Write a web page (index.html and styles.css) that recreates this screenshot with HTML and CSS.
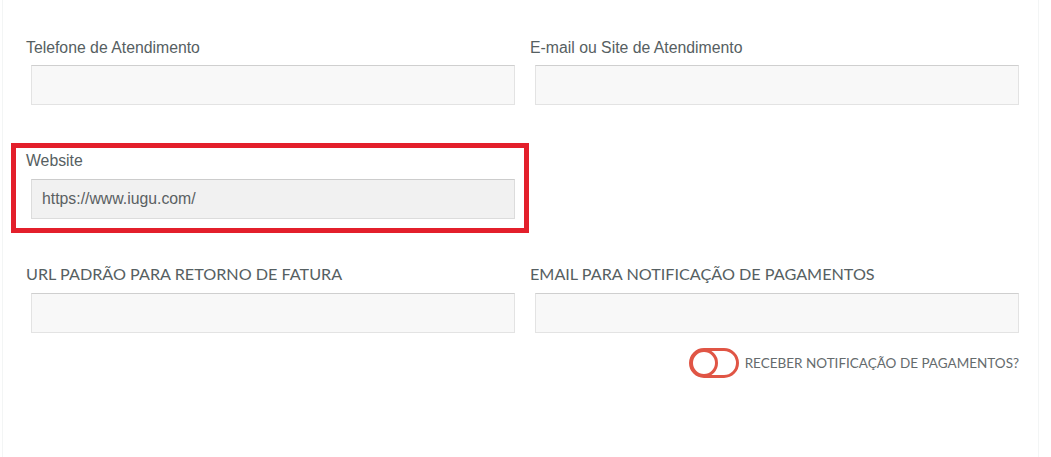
FILE: index.html
```html
<!DOCTYPE html>
<html lang="pt-BR">
<head>
<meta charset="utf-8">
<title>Configurações</title>
<link rel="stylesheet" href="styles.css">
</head>
<body>
<div class="panel">
  <div class="row">
    <div class="field">
      <label class="label">Telefone de Atendimento</label>
      <div class="input"></div>
    </div>
    <div class="field">
      <label class="label">E-mail ou Site de Atendimento</label>
      <div class="input"></div>
    </div>
  </div>

  <div class="highlight">
    <label class="label">Website</label>
    <div class="input disabled">https://www.iugu.com/</div>
  </div>

  <div class="row row-upper">
    <div class="field">
      <label class="label upper">URL PADRÃO PARA RETORNO DE FATURA</label>
      <div class="input"></div>
    </div>
    <div class="field">
      <label class="label upper">EMAIL PARA NOTIFICAÇÃO DE PAGAMENTOS</label>
      <div class="input"></div>
      <div class="toggle-row">
        <svg class="toggle" width="50" height="30" viewBox="0 0 50 30">
          <rect x="1.5" y="1.5" width="47" height="27" rx="13.5" ry="13.5" fill="none" stroke="#e05545" stroke-width="3"/>
          <circle cx="15" cy="15" r="12.5" fill="#fff" stroke="#e05545" stroke-width="3"/>
        </svg>
        <span class="toggle-label">RECEBER NOTIFICAÇÃO DE PAGAMENTOS?</span>
      </div>
    </div>
  </div>
</div>
</body>
</html>
```
FILE: styles.css
```css
html, body {
  margin: 0;
  padding: 0;
  background: #ffffff;
}

.panel {
  margin-left: 2px;
  width: 1037px;
  height: 457px;
  box-sizing: border-box;
  border-left: 1px solid #f3f5f5;
  border-right: 1px solid #f3f5f5;
  padding: 38px 0 0 8px;
  font-family: "Liberation Sans", Arial, sans-serif;
}

.row {
  display: grid;
  grid-template-columns: 504px 504px;
}

.field {
  display: flex;
  flex-direction: column;
  padding-left: 15px;
}

.label {
  display: block;
  font-size: 15.8px;
  line-height: 20px;
  color: #566062;
  margin-bottom: 7px;
}

.upper {
  font-family: Lato, "Liberation Sans", sans-serif;
  font-size: 16.2px;
  margin-bottom: 9px;
}

.input {
  margin-left: 5px;
  width: 484px;
  height: 40px;
  box-sizing: border-box;
  background: #f8f8f8;
  border: 1px solid #e3e3e3;
  border-top-color: #cfcfcf;
  padding-left: 10px;
  font-size: 15.8px;
  line-height: 38px;
  color: #5a6062;
}

.disabled {
  background: #f1f1f1;
  border-color: #dcdcdc;
  border-top-color: #cccccc;
}

.highlight {
  margin-top: 38px;
  width: 518px;
  box-sizing: border-box;
  border: 5px solid #e31f2b;
  padding: 3px 0 9px 10px;
}

.highlight .label {
  margin-bottom: 8px;
}

.row-upper {
  margin-top: 31px;
}

.toggle-row {
  display: flex;
  align-items: center;
  justify-content: flex-end;
  gap: 6px;
  margin-top: 15px;
}

.toggle {
  display: block;
}

.toggle-label {
  font-family: Lato, "Liberation Sans", sans-serif;
  font-size: 13.5px;
  color: #656b6d;
}
```
